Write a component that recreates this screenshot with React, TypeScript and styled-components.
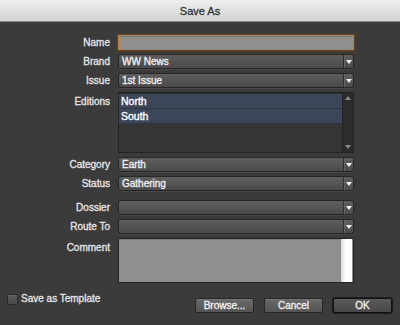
import styled, { createGlobalStyle } from 'styled-components';

const GlobalStyle = createGlobalStyle`
  html, body {
    margin: 0;
    padding: 0;
    background: #3b3b3b;
  }
  * {
    box-sizing: border-box;
  }
`;

const Window = styled.div`
  width: 400px;
  height: 325px;
  display: flex;
  flex-direction: column;
  background: #3b3b3b;
  font-family: 'Liberation Sans', Arial, sans-serif;
  font-size: 10px;
  color: #ececec;
  overflow: hidden;
`;

const TitleBar = styled.div`
  height: 22px;
  flex: none;
  display: flex;
  align-items: center;
  justify-content: center;
  background: linear-gradient(#eeeeee, #d2d2d2);
  border-bottom: 1px solid #8c8c8c;
  color: #333;
  font-size: 11px;
  -webkit-text-stroke: 0.3px #333;
`;

const Form = styled.div`
  display: flex;
  flex-direction: column;
  gap: 4px;
  padding-top: 13px;
`;

const Row = styled.div<{ $spaced?: boolean; $top?: boolean }>`
  display: flex;
  align-items: ${({ $top }) => ($top ? 'flex-start' : 'center')};
  gap: 8px;
  margin-top: ${({ $spaced }) => ($spaced ? '5px' : '0')};
`;

const Label = styled.div<{ $top?: boolean }>`
  width: 110px;
  flex: none;
  text-align: right;
  line-height: 15px;
  padding-top: ${({ $top }) => ($top ? '2px' : '0')};
  color: #e8e8e8;
  -webkit-text-stroke: 0.3px #e8e8e8;
`;

const TextInput = styled.div`
  width: 236px;
  height: 15px;
  background: #8f8f8f;
  border: 1px solid #d2771f;
  box-shadow: 0 0 0 1px #6a4522, inset 0 1px 0 #7a7a7a;
`;

const SelectBox = styled.div`
  width: 236px;
  height: 15px;
  display: flex;
  align-items: stretch;
  border: 1px solid #262626;
  border-radius: 2px;
  background: linear-gradient(#5e5e5e, #4a4a4a);
  box-shadow: 0 1px 0 #464646;
`;

const SelectValue = styled.div`
  flex: 1;
  padding-left: 3px;
  line-height: 13px;
  color: #f4f4f4;
  -webkit-text-stroke: 0.3px #f4f4f4;
  white-space: nowrap;
  overflow: hidden;
`;

const SelectArrow = styled.div`
  width: 10px;
  flex: none;
  display: flex;
  align-items: center;
  justify-content: center;
  border-left: 1px solid #2e2e2e;
  box-shadow: inset 1px 0 0 #666;
`;

const ListBox = styled.div`
  width: 236px;
  height: 61px;
  display: flex;
  border: 1px solid #242424;
  background: #353535;
  box-shadow: inset 0 1px 0 #2a2a2a;
`;

const ListItems = styled.div`
  flex: 1;
  display: flex;
  flex-direction: column;
  padding-top: 1px;
`;

const ListItem = styled.div<{ $selected?: boolean }>`
  height: 15px;
  line-height: 14px;
  padding-left: 2px;
  font-size: 10.5px;
  color: #ffffff;
  -webkit-text-stroke: 0.35px #ffffff;
  background: ${({ $selected }) => ($selected ? '#3c4659' : 'transparent')};
  border-bottom: 1px solid ${({ $selected }) => ($selected ? '#2c3442' : 'transparent')};
`;

const ScrollBar = styled.div`
  width: 11px;
  flex: none;
  display: flex;
  flex-direction: column;
  justify-content: space-between;
  align-items: center;
  padding: 3px 0;
  background: #2c2c2c;
  border-left: 1px solid #222;
`;

const CommentBox = styled.div`
  width: 236px;
  height: 45px;
  display: flex;
  justify-content: flex-end;
  background: #8f8f8f;
  border: 1px solid #242424;
  box-shadow: inset 0 1px 0 #7c7c7c;
`;

const CommentScroll = styled.div`
  width: 11px;
  margin-right: 1px;
  background: linear-gradient(90deg, #d8d8d8, #ffffff 40%);
`;

const Footer = styled.div`
  display: flex;
  justify-content: space-between;
  align-items: flex-start;
  padding: 0 8px 0 7px;
  margin-top: 10px;
`;

const CheckRow = styled.label`
  display: flex;
  align-items: center;
  gap: 3px;
  line-height: 12px;
  color: #e8e8e8;
  -webkit-text-stroke: 0.3px #e8e8e8;
`;

const CheckBox = styled.span`
  width: 11px;
  height: 11px;
  border: 1px solid #2a2a2a;
  border-radius: 2px;
  background: linear-gradient(#5c5c5c, #4a4a4a);
  box-shadow: inset 0 1px 0 #686868;
`;

const ButtonGroup = styled.div`
  display: flex;
  gap: 10px;
  margin-top: 5px;
`;

const Button = styled.button<{ $default?: boolean }>`
  width: 59px;
  height: 15px;
  padding: 0;
  font-family: inherit;
  font-size: 10px;
  line-height: 13px;
  color: #f2f2f2;
  -webkit-text-stroke: 0.3px #f2f2f2;
  border: 1px solid ${({ $default }) => ($default ? '#111' : '#262626')};
  border-radius: 2px;
  background: ${({ $default }) =>
    $default ? 'linear-gradient(#5a5a5a, #474747)' : 'linear-gradient(#6a6a6a, #545454)'};
  box-shadow: ${({ $default }) => ($default ? '0 0 0 1px #1c1c1c' : 'inset 0 1px 0 #777')};
`;

const Arrow = ({ up, color = '#f4f4f4' }: { up?: boolean; color?: string }) => (
  <svg width="6" height="4" viewBox="0 0 6 4">
    <path d={up ? 'M0 4 L3 0 L6 4 Z' : 'M0 0 L6 0 L3 4 Z'} fill={color} />
  </svg>
);

const Select = ({ value }: { value?: string }) => (
  <SelectBox>
    <SelectValue>{value}</SelectValue>
    <SelectArrow>
      <Arrow />
    </SelectArrow>
  </SelectBox>
);

export default function App() {
  return (
    <Window>
      <GlobalStyle />
      <TitleBar>Save As</TitleBar>
      <Form>
        <Row>
          <Label>Name</Label>
          <TextInput />
        </Row>
        <Row>
          <Label>Brand</Label>
          <Select value="WW News" />
        </Row>
        <Row>
          <Label>Issue</Label>
          <Select value="1st Issue" />
        </Row>
        <Row $top>
          <Label $top>Editions</Label>
          <ListBox>
            <ListItems>
              <ListItem $selected>North</ListItem>
              <ListItem $selected>South</ListItem>
            </ListItems>
            <ScrollBar>
              <Arrow up color="#8a8a8a" />
              <Arrow color="#8a8a8a" />
            </ScrollBar>
          </ListBox>
        </Row>
        <Row>
          <Label>Category</Label>
          <Select value="Earth" />
        </Row>
        <Row>
          <Label>Status</Label>
          <Select value="Gathering" />
        </Row>
        <Row $spaced>
          <Label>Dossier</Label>
          <Select />
        </Row>
        <Row>
          <Label>Route To</Label>
          <Select />
        </Row>
        <Row $top>
          <Label $top>Comment</Label>
          <CommentBox>
            <CommentScroll />
          </CommentBox>
        </Row>
      </Form>
      <Footer>
        <CheckRow>
          <CheckBox />
          Save as Template
        </CheckRow>
        <ButtonGroup>
          <Button>Browse...</Button>
          <Button>Cancel</Button>
          <Button $default>OK</Button>
        </ButtonGroup>
      </Footer>
    </Window>
  );
}
